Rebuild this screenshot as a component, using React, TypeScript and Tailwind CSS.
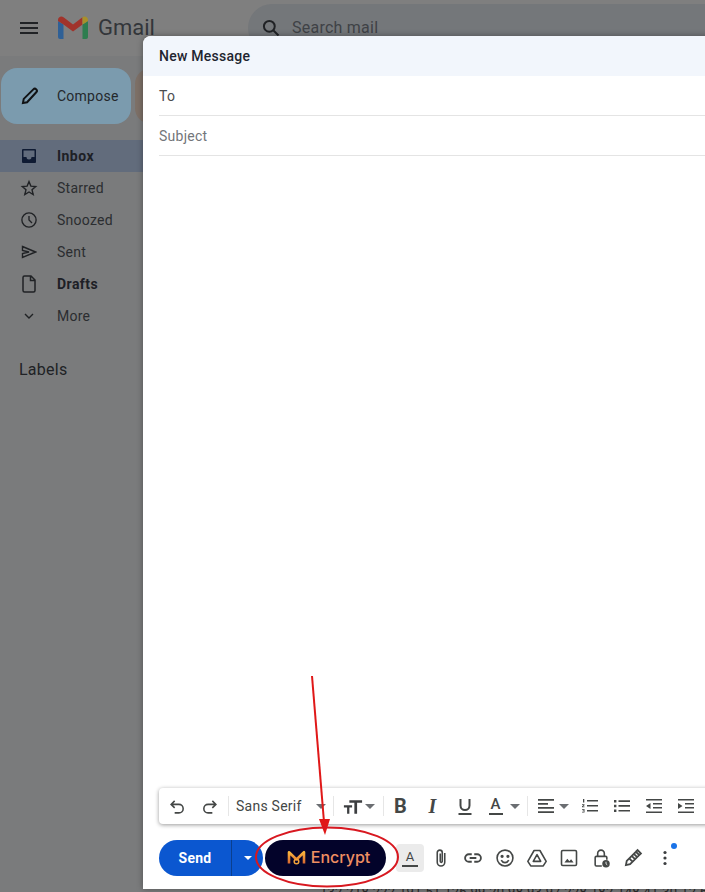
import React from "react";

const ic = "fill-none stroke-current";

function SideItem({ icon, label, bold, active }: { icon: React.ReactNode; label: string; bold?: boolean; active?: boolean }) {
  return (
    <div className={`flex h-8 items-center pl-[19px] text-[14px] ${active ? "bg-[#626c7c]" : ""} ${bold ? "font-bold tracking-[0.45px] text-[#1d2026]" : "text-[#2b2d30]"}`}>
      <span className="flex w-5 h-5 items-center justify-center text-[#202225]">{icon}</span>
      <span className="ml-[18px]">{label}</span>
    </div>
  );
}

function Tool({ children, className = "" }: { children: React.ReactNode; className?: string }) {
  return <span className={`flex shrink-0 items-center justify-center text-[#444746] ${className}`}>{children}</span>;
}

function Caret() {
  return (
    <svg width="10" height="5" viewBox="0 0 10 5" className="fill-current text-[#6b6e72]">
      <path d="M0 0h10L5 5z" />
    </svg>
  );
}

function Divider() {
  return <span className="block h-5 w-px shrink-0 bg-[#e6e6e6]" />;
}

export default function App() {
  return (
    <div className="relative h-[892px] w-[705px] overflow-hidden bg-[#7a7b7c] font-['Roboto','Liberation_Sans',sans-serif] tracking-[0.25px]">
      {/* top bar */}
      <header className="flex h-14 items-center bg-[#7f7f7f]">
        <svg width="18" height="12" viewBox="0 0 18 12" className="ml-5 shrink-0 fill-[#202225]">
          <path d="M0 0h18v2H0zM0 5h18v2H0zM0 10h18v2H0z" />
        </svg>
        <svg width="32" height="24" viewBox="0 0 32 24" className="ml-[19px] shrink-0">
          <path d="M1 21V5l5.500 3.500V23H3a2 2 0 0 1-2-2z" fill="#2f6096" />
          <path d="M25.500 8.500L31 5v16a2 2 0 0 1-2 2h-3.500z" fill="#2e7d4f" />
          <path d="M6.500 8.500 1 5V4c0-3 3.300-4.300 5.500-2.700L16 8.500v7z" fill="#a1332b" />
          <path d="M16 8.500l9.500-7.200v7.200L16 15.500z" fill="#a1332b" />
          <path d="M25.500 1.300C27.700-.3 31 1 31 4v1l-5.500 3.500z" fill="#a8902a" />
        </svg>
        <span className="ml-[9px] shrink-0 text-[22px] leading-none tracking-normal text-[#33363a]">Gmail</span>
        <div className="ml-[93px] flex h-12 w-[500px] shrink-0 items-center rounded-full bg-[#74777a] pl-[13px]">
          <svg width="20" height="20" viewBox="0 0 24 24" className={`${ic} shrink-0 text-[#202225]`} strokeWidth="2.400">
            <circle cx="10" cy="10" r="6.500" />
            <path d="M15 15l6 6" />
          </svg>
          <span className="ml-[11px] text-[16px] text-[#3f4246]">Search mail</span>
        </div>
      </header>

      {/* compose row */}
      <div className="mt-3 flex h-14 gap-1 pl-px">
        <div className="flex w-[130px] items-center rounded-2xl bg-[#7b9bae] pl-[19px] text-[14px] text-[#24282c]">
          <svg width="20" height="20" viewBox="0 0 24 24" className={`${ic} text-[#101214]`} strokeWidth="2.400">
            <path d="M3.500 20.500l1-5L16 4c1-1 2.500-1 3.500 0s1 2.500 0 3.500L8.500 19.500z" />
          </svg>
          <span className="ml-[17px]">Compose</span>
        </div>
        <div className="w-20 rounded-2xl bg-[#7d7067]" />
      </div>

      {/* sidebar */}
      <nav className="mt-4">
        <SideItem active bold label="Inbox" icon={<svg width="16" height="16" viewBox="0 0 16 16"><path d="M1 2a1 1 0 0 1 1-1h12a1 1 0 0 1 1 1v12a1 1 0 0 1-1 1H2a1 1 0 0 1-1-1z" fill="#0f1b33" /><path d="M2.500 2.500h11v6.500H10.500a2.500 2.500 0 0 1-5 0H2.500z" fill="#626c7c" /></svg>} />
        <SideItem label="Starred" icon={<svg width="18" height="18" viewBox="0 0 24 24" className={ic} strokeWidth="1.800"><path d="M12 3.500l2.500 6 6.500.5-5 4.300 1.600 6.400L12 17.300l-5.600 3.400L8 14.300 3 10l6.500-.5z" /></svg>} />
        <SideItem label="Snoozed" icon={<svg width="18" height="18" viewBox="0 0 24 24" className={ic} strokeWidth="1.800"><circle cx="12" cy="12" r="9.500" /><path d="M12 6.500V12l4 4" /></svg>} />
        <SideItem label="Sent" icon={<svg width="16" height="14" viewBox="0 0 16 14" className={ic} strokeWidth="1.400"><path d="M1.500 1.500L14.500 7 1.500 12.500V8.500L8 7 1.500 5.500z" /></svg>} />
        <SideItem bold label="Drafts" icon={<svg width="14" height="18" viewBox="0 0 14 18" className={ic} strokeWidth="1.500"><path d="M1 2.500a1.500 1.500 0 0 1 1.500-1.500H9l4 4v10.500a1.500 1.500 0 0 1-1.500 1.500h-9A1.500 1.500 0 0 1 1 15.500zM8.500 1v4.500H13" /></svg>} />
        <SideItem label="More" icon={<svg width="10" height="6" viewBox="0 0 10 6" className={ic} strokeWidth="1.400"><path d="M1 1l4 4 4-4" /></svg>} />
      </nav>
      <div className="mt-7 pl-[19px] text-[16px] leading-5 text-[#202225]">Labels</div>

      {/* faint text under the dialog */}
      <div className="absolute left-[320px] top-[885px] whitespace-nowrap text-[13px] leading-none text-[#2a2a2a]">132.218.222.191.51.126.99.20.98.93.97.228.182.148.41.30.12.61</div>

      {/* compose dialog */}
      <div className="absolute left-[143px] top-9 flex h-[853px] w-[600px] flex-col rounded-t-lg bg-white shadow-[0_0_6px_rgba(0,0,0,0.35)]">
        <div className="flex h-10 items-center rounded-t-lg bg-[#f2f6fc] pl-4 text-[14px] font-medium text-[#1f2530]">New Message</div>
        <div className="ml-4 flex h-10 items-center border-b border-[#e4e4e4] pt-px text-[14px] text-[#4a4d50]">To</div>
        <div className="ml-4 flex h-10 items-center border-b border-[#e4e4e4] pt-[2px] text-[14px] text-[#73767a]">Subject</div>
        <div className="flex-1" />

        {/* format bar */}
        <div className="ml-4 flex h-9 w-[580px] items-center rounded-[4px] bg-white pl-2 shadow-[0_1px_4px_rgba(0,0,0,0.4)]">
          <Tool className="w-5">
            <svg width="17" height="17" viewBox="0 0 24 24" className={ic} strokeWidth="2.200"><path d="M8 4L3 9l5 5M3 9h11a6 6 0 0 1 0 12H8" /></svg>
          </Tool>
          <Tool className="ml-3 w-5">
            <svg width="17" height="17" viewBox="0 0 24 24" className={ic} strokeWidth="2.200"><path d="M16 4l5 5-5 5M21 9H10a6 6 0 0 0 0 12h6" /></svg>
          </Tool>
          <span className="ml-[9px] mr-[7px]"><Divider /></span>
          <span className="text-[14px] text-[#444746]">Sans Serif</span>
          <span className="ml-[14px]"><Caret /></span>
          <span className="ml-[7px] mr-[9px]"><Divider /></span>
          <Tool className="w-5">
            <svg width="20" height="15" viewBox="0 0 22 16" className="fill-[#3c3e40]"><path d="M7 1h14v3h-5.500v12h-3V4H7zM1 6.500h9V9H7v7H4.500V9H1z" /></svg>
          </Tool>
          <span className="ml-[2px]"><Caret /></span>
          <span className="ml-2 mr-[7px]"><Divider /></span>
          <Tool className="w-5 text-[20px] font-bold leading-none">B</Tool>
          <Tool className="ml-3 w-5 text-[20px] font-bold italic leading-none font-['Liberation_Serif',serif]">I</Tool>
          <Tool className="ml-3 w-5">
            <svg width="14" height="17" viewBox="0 0 14 17" className={ic} strokeWidth="2"><path d="M2.500 1v6.500a4.500 4.500 0 0 0 9 0V1M0.500 16h13" /></svg>
          </Tool>
          <Tool className="ml-[11px] w-5 flex-col text-[15px] font-medium leading-none">
            <span>A</span>
            <span className="mt-px h-[2px] w-[14px] bg-[#444746]" />
          </Tool>
          <span className="ml-1"><Caret /></span>
          <span className="ml-[7px] mr-2"><Divider /></span>
          <Tool className="w-5">
            <svg width="16" height="16" viewBox="0 0 16 16" className="fill-[#444746]"><path d="M0 1h16v1.800H0zM0 5h10v1.800H0zM0 9h16v1.800H0zM0 13.200h16V15H0z" /></svg>
          </Tool>
          <span className="ml-[3px]"><Caret /></span>
          <Tool className="ml-[11px] w-5">
            <svg width="16" height="14" viewBox="0 0 16 14" className="fill-[#444746]"><path d="M5 1h11v1.600H5zM5 6h11v1.600H5zM5 11h11v1.600H5zM1 0h1.300v3.500H1zM0 5.200h2.500v1L1 7.500h1.500v.8H0v-1l1.500-1.300H0zM0 10h2.500v3.500H0v-.8h1.700v-.6H.7v-.7h1v-.6H0z" /></svg>
          </Tool>
          <Tool className="ml-3 w-5">
            <svg width="16" height="12" viewBox="0 0 16 12" className="fill-[#444746]"><path d="M0 0h2.400v2.400H0zM0 4.800h2.400v2.400H0zM0 9.600h2.400V12H0zM4.500.3H16v1.700H4.500zM4.500 5.100H16v1.700H4.500zM4.500 9.900H16v1.700H4.500z" /></svg>
          </Tool>
          <Tool className="ml-3 w-5">
            <svg width="16" height="16" viewBox="0 0 16 16" className="fill-[#444746]"><path d="M0 1h16v1.600H0zM7 5h9v1.600H7zM7 9h9v1.600H7zM0 13.400h16V15H0zM4.500 5v6L0 8z" /></svg>
          </Tool>
          <Tool className="ml-3 w-5">
            <svg width="16" height="16" viewBox="0 0 16 16" className="fill-[#444746]"><path d="M0 1h16v1.600H0zM7 5h9v1.600H7zM7 9h9v1.600H7zM0 13.400h16V15H0zM0 5v6l4.500-3z" /></svg>
          </Tool>
        </div>

        {/* action row */}
        <div className="ml-4 mb-[13px] mt-[16px] flex h-9 items-center">
          <button className="flex h-9 w-[72px] items-center justify-center rounded-l-full bg-[#0b57d0] text-[14px] font-bold text-white">Send</button>
          <button className="flex h-9 w-8 items-center justify-center rounded-r-full border-l border-[#0a3f8f] bg-[#0b57d0]">
            <svg width="8" height="4" viewBox="0 0 8 4" className="fill-white"><path d="M0 0h8L4 4z" /></svg>
          </button>
          <button className="ml-[2px] flex h-9 w-[121px] items-center justify-center rounded-full bg-[#03032a] pb-[2px] pl-[6px] font-['Inter',sans-serif] text-[16px] font-medium tracking-normal text-[#f08f62]">
            <svg width="19" height="15" viewBox="0 0 19 15" className="mr-[5px] fill-none" strokeWidth="2.600">
              <defs>
                <linearGradient id="enc" x1="0" y1="0" x2="0" y2="1">
                  <stop offset="0" stopColor="#f9b53c" />
                  <stop offset="1" stopColor="#d9662f" />
                </linearGradient>
              </defs>
              <path d="M2 13.500V2.200L9.500 9.500 17 2.200V13.500" stroke="url(#enc)" strokeLinejoin="round" />
              <circle cx="9.500" cy="11.500" r="2.300" stroke="#f2a33a" strokeWidth="1.500" />
            </svg>
            Encrypt
          </button>
          <span className="ml-[10px] flex h-7 w-7 flex-col items-center justify-center rounded bg-[#ebebeb] text-[13px] leading-none text-[#444746]">
            <span>A</span>
            <span className="mt-[2px] h-[2px] w-4 bg-[#444746]" />
          </span>
          <Tool className="ml-[7px] w-5">
            <svg width="20" height="20" viewBox="0 0 24 24" className={ic} strokeWidth="1.900"><path d="M16.500 6v11a4.500 4.500 0 0 1-9 0V5.500a3 3 0 0 1 6 0V16a1.200 1.200 0 0 1-2.400 0V6.500" /></svg>
          </Tool>
          <Tool className="ml-3 w-5">
            <svg width="20" height="20" viewBox="0 0 24 24" className={ic} strokeWidth="2.200"><path d="M10.500 7.500H7a4.500 4.500 0 0 0 0 9h3.500M13.500 7.500H17a4.500 4.500 0 0 1 0 9h-3.500M8 12h8" /></svg>
          </Tool>
          <Tool className="ml-3 w-5">
            <svg width="20" height="20" viewBox="0 0 24 24" className={ic} strokeWidth="1.900"><circle cx="12" cy="12" r="9.500" /><circle cx="8.500" cy="10" r="1" className="fill-current" /><circle cx="15.500" cy="10" r="1" className="fill-current" /><path d="M7.500 14.500c1 2 2.700 3 4.500 3s3.500-1 4.500-3" /></svg>
          </Tool>
          <Tool className="ml-3 w-5">
            <svg width="20" height="20" viewBox="0 0 24 24" className={ic} strokeWidth="1.900" strokeLinejoin="round"><path d="M8.500 3h7L23 16l-3.500 5.500h-15L1 16zM12 8l-4.500 8h9z" /></svg>
          </Tool>
          <Tool className="ml-3 w-5">
            <svg width="20" height="20" viewBox="0 0 24 24" className={ic} strokeWidth="1.900"><rect x="3" y="3" width="18" height="18" rx="1.500" /><path d="M6.500 17.500l3.500-4.500 2.500 3 2-2.500 3 4z" className="fill-current" strokeWidth="0" /></svg>
          </Tool>
          <Tool className="ml-3 w-5">
            <svg width="20" height="20" viewBox="0 0 24 24" className={ic} strokeWidth="1.900"><path d="M8 10V6.500a4 4 0 0 1 8 0V10M13 21.500H6.500A1.500 1.500 0 0 1 5 20v-8.500A1.500 1.500 0 0 1 6.500 10h11a1.500 1.500 0 0 1 1.500 1.500V14" /><circle cx="18" cy="19" r="4.500" className="fill-current" strokeWidth="0" /><path d="M18 16.500V19l1.500 1.200" stroke="#ffffff" strokeWidth="1" /></svg>
          </Tool>
          <Tool className="ml-3 w-5">
            <svg width="20" height="20" viewBox="0 0 24 24" className={ic} strokeWidth="2.200"><path d="M3.500 20.500l1-5L15.500 4.500l4 4-11 11zM8 13l4 4M11 10l4 4M13 7l4 4M15.500 4.500l2-2 4 4-2 2" /></svg>
          </Tool>
          <Tool className="relative ml-3 w-5">
            <svg width="4" height="16" viewBox="0 0 4 16" className="fill-[#3c3e40]"><circle cx="2" cy="2.500" r="1.600" /><circle cx="2" cy="8" r="1.600" /><circle cx="2" cy="13.500" r="1.600" /></svg>
            <span className="absolute left-[16px] top-[-7px] h-[6px] w-[6px] rounded-full bg-[#1a73e8]" />
          </Tool>
        </div>
      </div>

      {/* annotations */}
      <svg width="705" height="892" viewBox="0 0 705 892" className="pointer-events-none absolute left-0 top-0">
        <path d="M312 676L324 822" stroke="#e01818" strokeWidth="2" fill="none" />
        <path d="M319 819h11l-5 16z" fill="#e01818" />
        <ellipse cx="327" cy="857" rx="71" ry="29.500" stroke="#d81820" strokeWidth="2" fill="none" />
      </svg>
    </div>
  );
}
